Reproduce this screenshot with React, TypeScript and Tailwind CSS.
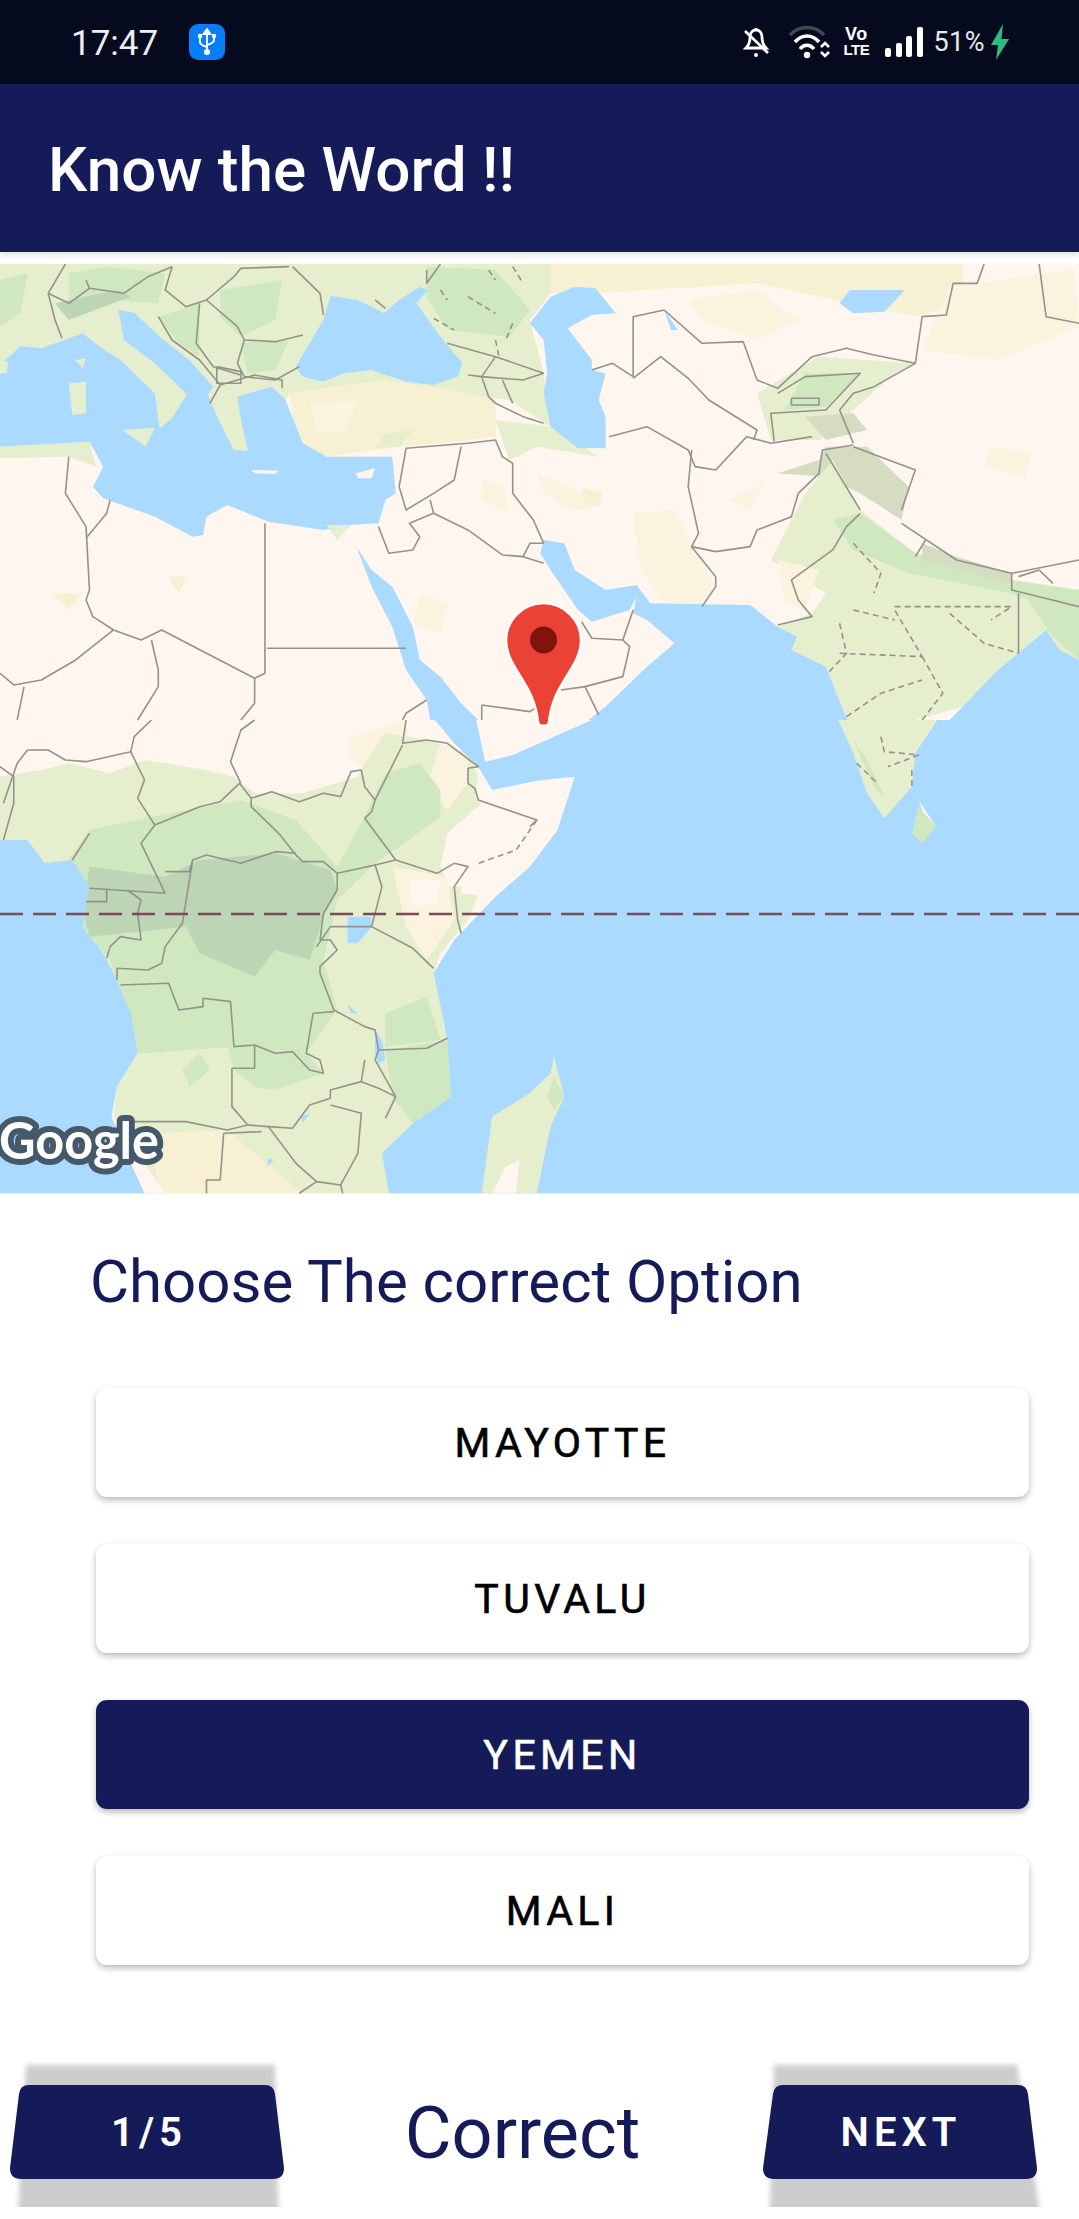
import React from "react";

const WATER = "#aadaff";
const CREAM = "#fff6ef";
const SAND = "#f8f0d2";
const PALE = "#fbf3de";
const LIGHT = "#e6efcd";
const GREEN = "#d0e8bf";
const DARK = "#bcd5b5";
const ROCK = "#d5dcc2";
const LINE = "#93938b";

type P = number[];
const pts = (a: P) => {
  let s = "";
  for (let i = 0; i < a.length; i += 2) s += a[i] + "," + a[i + 1] + " ";
  return s;
};

// Upper map: coordinates read from the upper half of the reference.
const upperFills: [string, P][] = [
  [SAND, [780,12,1400,12,1400,130,1330,170,1100,70,860,100,800,100]],
  [LIGHT, [0,12,800,12,800,100,770,180,790,340,800,500,740,420,660,400,560,360,420,400,380,580,210,570,0,320]],
  [GREEN, [0,60,40,40,30,160,0,200]],
  [GREEN, [100,40,160,20,240,40,230,130,160,120,100,120]],
  [GREEN, [320,90,410,60,400,180,350,230,320,170]],
  [GREEN, [620,20,720,30,770,150,740,230,650,210,620,110]],
  [GREEN, [350,250,420,240,400,330,360,340]],
  [GREEN, [230,170,290,130,290,290,260,250]],
  [DARK, [80,130,170,90,190,110,100,180]],
  [SAND, [420,400,560,360,660,390,720,420,720,530,640,550,580,560,470,590,430,550]],
  [PALE, [450,430,520,420,500,520,460,520]],
  [LIGHT, [560,520,600,510,580,560,545,565]],
  [LIGHT, [720,480,800,500,870,590,780,560,740,600]],
  [LIGHT, [0,560,130,545,140,620,100,590,0,595]],
  [PALE, [780,640,840,690,870,740,830,750,790,700]],
  [PALE, [920,760,980,750,1040,980,1020,1040,960,1020,930,920]],
  [PALE, [700,660,730,680,740,760,700,720]],
  [SAND, [845,680,875,700,870,740,850,730]],
  [PALE, [610,1000,650,1030,640,1120,600,1090]],
  [SAND, [245,950,270,950,260,1000]],
  [SAND, [75,1000,120,1000,100,1050]],
  [PALE, [1000,120,1100,90,1160,180,1100,240,1020,180]],
  [PALE, [1380,80,1560,30,1568,200,1450,300,1340,270]],
  [PALE, [1440,560,1500,580,1490,650,1430,620]],
  [PALE, [1060,720,1110,670,1090,750]],
  [LIGHT, [1100,400,1190,290,1330,310,1300,340,1240,450,1190,540,1120,540]],
  [GREEN, [1170,340,1250,340,1200,440,1140,450]],
  [ROCK, [1130,640,1190,600,1200,560,1260,560,1320,680,1310,780,1250,700,1200,650]],
  [ROCK, [1170,470,1240,460,1260,510,1200,540]],
  [LIGHT, [1130,1100,1180,1060,1200,1000,1120,900,1170,700,1210,600,1250,750,1330,880,1470,970,1568,1000,1568,1210,1480,1180,1400,1340,1330,1380,1230,1380,1200,1220,1150,1170]],
  [GREEN, [1210,780,1250,760,1330,880,1470,960,1568,990,1568,1080,1470,1000,1320,940,1240,870]],
  [GREEN, [1490,1010,1568,1040,1568,1200,1530,1130]],
  [ROCK, [1340,850,1390,890,1470,940,1470,970,1340,900]],
  [PALE, [1130,900,1190,930,1170,1050,1140,1020]],
];

const upperWater: P[] = [
  [0,315,30,258,60,265,120,220,145,260,175,300,225,400,232,505,250,475,272,400,300,395,320,490,340,570,360,572,350,480,345,410,395,380,415,420,440,550,475,590,570,590,575,700,560,720,550,790,510,795,470,810,390,785,330,735,300,770,295,825,280,830,225,770,150,715,135,680,150,620,130,545,0,560],
  [172,150,195,158,235,235,275,300,310,380,300,410,270,400,225,310,180,240],
  [480,108,520,120,558,160,580,120,610,80,622,90,605,130,640,230,672,310,665,350,630,375,590,365,540,330,500,340,470,365,440,350,430,320,450,250,470,180],
  [835,80,865,85,895,160,860,165,825,205,860,300,860,330,880,340,870,420,880,470,880,565,840,565,800,500,790,400,795,340,790,240,770,190,800,110],
  [518,860,540,930,570,980,600,1100,610,1200,640,1250,670,1330,695,1380,625,1380,620,1320,590,1230,570,1100,540,980],
  [790,840,820,850,835,930,880,990,925,975,945,1030,925,1010,915,1050,860,1085,840,1050,830,1020,800,930,785,880],
  [925,1010,945,1030,1090,1035,1130,1100,1158,1130,1150,1170,1200,1220,1225,1350,1232,1380,1380,1380,1450,1230,1480,1180,1520,1110,1540,1170,1568,1200,1568,1380,855,1380,880,1340,940,1220,980,1150,940,1080,920,1060],
  [1235,90,1315,90,1285,155,1240,160,1220,130],
  [965,150,985,210,975,210],
];

const upperLand: [string, P][] = [
  [LIGHT, [100,370,125,365,125,460,105,465]],
  [LIGHT, [178,510,225,503,212,560]],
  [CREAM, [365,630,405,632,400,642,370,640]],
  [CREAM, [517,640,545,625,540,655,520,655]],
  [LIGHT, [110,300,125,295,120,325]],
  [LIGHT, [0,305,12,305,10,340,0,340]],
  [LIGHT, [475,795,510,795,490,840]],
];

const upperBorders: P[] = [
  [95,12,70,100,80,180,90,235],[125,60,130,85,180,100,215,50,250,20],[70,100,100,130,130,85],
  [250,20,240,90,270,140,300,120,340,50,350,25,420,20],[425,20,465,100,470,165],
  [300,120,345,200,355,240,400,245,440,225],[290,130,285,250,310,320,350,345],
  [230,170,250,240,290,300,320,375,305,430],[355,240,345,310,355,350,400,360,435,320],
  [320,375,370,345,410,360,410,385],[315,320,350,335,350,370,315,370,315,320],
  [620,30,620,70,640,12],[650,250,720,290,790,340,760,360,700,350,680,345],
  [720,290,700,350,710,410,720,430,760,470,790,490],[730,360,745,430],[545,120,560,145],
  [590,565,680,550,720,540,730,590,745,610,745,700,775,780,790,850],
  [590,565,580,680,590,750,630,700,660,660,670,560],
  [625,720,630,760,595,790,610,830,600,870,565,880,550,800],
  [630,760,680,810,730,885,760,890,770,850,790,850],[760,890,790,910],
  [885,530,940,500,1000,570,1010,620,1040,630,1085,530,1120,550,1180,530],
  [1005,570,1000,680,1015,820,1005,860,1040,950,1040,980,1020,1040],
  [1005,860,1040,875,1090,860,1100,810,1150,770,1160,700,1190,640,1195,570,1240,555],
  [1250,760,1230,800,1210,870,1150,960,1160,1020,1180,1070,1130,1095],
  [860,330,890,310,920,350,920,170,965,150,1020,250,1080,245,1100,360,1130,385,1180,290,1230,265,1270,285,1330,310,1340,170,1375,165,1385,70,1420,70,1430,12],
  [920,355,960,290,1000,355,1030,420,1100,510,1095,540],
  [1130,400,1170,350,1250,340,1200,450,1120,460,1125,545],[1150,415,1190,415,1190,435,1150,435,1150,415],
  [1330,310,1270,380,1240,400,1220,450,1240,550],[1240,560,1330,630,1310,750],[1200,580,1250,750],
  [1310,790,1390,900,1470,940,1568,900],[1330,890,1345,840],[1510,12,1520,170,1568,190],
  [1470,940,1470,990,1568,1040],[1480,1000,1480,1180],[1480,950,1510,930,1530,970],
  [700,1335,770,1355,790,1330],[815,1290,850,1280,905,1250,915,1160,905,1140,860,1135,845,1085],
  [850,1280,870,1365],[905,1140,920,1050],
  [100,590,95,700,125,800,130,990,125,1020,135,1070,165,1110,205,1140,235,1110,370,1255,385,1240,385,790],
  [125,835,155,760,160,720],[165,1110,110,1200,60,1260,20,1275,0,1240],[35,1280,25,1380],
  [220,1140,230,1230,230,1280,200,1380],[370,1255,370,1330,350,1380],[388,1165,590,1165],
  [620,1320,590,1360,585,1380],[700,1335,700,1380],
];

const upperDashes: P[] = [
  [640,90,650,120],[680,110,720,160],[710,30,720,60],[745,20,760,70],[630,175,660,210],[745,190,735,240],[720,240,725,290],
  [1240,1050,1260,1060,1300,1080],[1220,1090,1230,1180,1205,1235],[1220,1180,1340,1190,1300,1050],[1300,1040,1380,1040,1470,1040,1440,1080],
  [1380,1060,1430,1150,1480,1180],[1240,850,1280,940,1270,1000],[1340,1190,1370,1300,1340,1380],[1230,1370,1280,1300,1340,1260],
];

// Lower map: coordinates read from the lower half of the reference.
const lowerFills: [string, P][] = [
  [PALE, [510,50,590,0,600,130,550,170,510,120]],
  [LIGHT, [0,170,60,150,100,130,160,160,210,120,300,150,340,170,370,220,440,220,520,170,530,130,560,40,620,60,680,100,695,170,690,230,700,250,680,350,640,430,650,500,700,500,680,600,640,700,630,760,650,960,655,1130,600,1210,555,1300,565,1420,210,1420,165,1190,170,1100,200,1000,100,600,0,360]],
  [PALE, [640,70,680,110,680,190,650,270,620,200]],
  [CREAM, [700,250,780,300,810,330,770,440,720,530,670,520,670,430,640,440,650,340]],
  [PALE, [570,440,650,470,660,600,620,720,590,620]],
  [CREAM, [595,480,640,480,635,550,600,560]],
  [GREEN, [100,420,130,330,220,290,350,240,430,300,490,440,530,290,560,160,610,130,640,210,640,290,580,380,545,430,490,540,470,720,490,870,445,1000,470,1060,400,1110,370,1100,340,1050,330,970,200,1000,160,720,120,620]],
  [GREEN, [190,880,340,900,340,980,210,1000]],
  [GREEN, [560,990,650,960,655,1130,600,1210,570,1130]],
  [GREEN, [560,880,620,830,640,960,560,980]],
  [GREEN, [265,1050,290,1000,305,1050,275,1100]],
  [GREEN, [340,1050,400,1010,460,1060,370,1100]],
  [DARK, [130,440,240,470,290,420,400,400,480,450,490,510,470,590,450,720,400,690,370,770,290,700,270,620,130,650,120,570]],
  [SAND, [220,1240,330,1230,440,1420,230,1420]],
  [CREAM, [165,1190,200,1300,240,1420,210,1420,170,1300]],
];

const lowerWater: P[] = [
  [632,0,692,0,705,125,745,105,860,0,1568,0,1568,1420,565,1420,555,1300,600,1210,655,1130,650,960,630,760,660,660,720,530,770,440,810,330,835,170,780,182,715,210,695,140,660,70],
  [0,360,40,360,65,430,105,420,130,500,120,620,150,700,165,760,190,880,200,1000,170,1100,162,1190,190,1330,210,1420,0,1420],
  [505,590,540,590,540,620,520,670,505,670],
  [545,930,555,960,560,1020,550,1030,545,1000],
  [505,855,520,880,510,880],
  [438,1190,450,1180,440,1210],
  [390,1315,398,1320,388,1340],
];

const lowerLand: [string, P][] = [
  [LIGHT, [805,1010,820,1130,800,1220,780,1420,700,1420,715,1190,770,1120,800,1060]],
  [GREEN, [805,1070,820,1130,805,1170,795,1130]],
  [CREAM, [735,1340,755,1320,750,1420,715,1420]],
  [LIGHT, [1218,0,1362,0,1330,100,1325,200,1285,295,1260,220,1240,100]],
  [GREEN, [1240,60,1260,120,1285,230,1270,200]],
  [CREAM, [1335,240,1360,320,1345,300]],
  [GREEN, [1335,260,1360,320,1340,370,1325,340]],
];

const lowerBorders: P[] = [
  [0,140,20,170,20,250,5,360],[40,90,70,90,95,120,125,125,190,95,210,180,200,235,225,315,290,260,320,245,348,190,365,235,395,215,435,245,470,220,495,230,510,155,525,150,530,200,545,240,540,275,530,295,575,420],
  [40,90,25,130,5,250],[190,95,195,50,220,0],[370,0,350,30,335,125,350,190],
  [590,0,585,70,620,60,650,70,695,140,680,145,680,190,690,205,695,240,780,300,770,320],[585,75,545,240],
  [225,315,205,370,240,520],[130,340,105,420],[575,420,635,460,660,430,680,440,660,500,665,600,670,640],
  [490,460,545,435,575,420],[545,435,555,500,540,620],[430,405,440,425,470,425,490,460,490,510,470,580,465,660],
  [430,400,400,395,350,430,300,405,280,420,265,610,240,680,235,730,215,750,170,745,170,780],
  [240,455,275,455,280,420],[430,405,405,340,365,260,365,235],[130,505,240,520],[155,510,155,545,125,545],
  [185,510,205,540,200,580,205,660,175,650,160,680,155,715],[480,620,540,620,600,685,630,745],[480,620,460,680],
  [465,660,480,660,490,690,465,740,465,760,485,870,530,920,545,930,550,990,545,1020,575,1130,560,1195],
  [175,795,245,790,260,870,295,860,295,835,335,845,340,980,370,975,400,1000,425,995,450,1050,470,1060,465,1020,445,1000,455,880,485,875],
  [370,975,370,1045,337,1045,337,1160,360,1215,330,1230,270,1205,195,1205],
  [360,1215,390,1220,425,1225,450,1155,480,1135,480,1110,525,1085,530,1020],
  [480,1155,525,1180,520,1300,495,1395,460,1385,435,1420],[525,1085,550,1105,575,1130],[550,990,620,985,650,955],
  [390,1220,430,1330,460,1385],[325,1240,320,1380,300,1380,300,1420],[325,1240,380,1235],[495,1395,498,1420],
];
const lowerDashes: P[] = [[780,300,750,390,695,430],[1280,50,1285,95,1335,105],[1335,105,1290,140],[1245,130,1275,190],[1325,150,1325,200]];

function Poly({ a, fill }: { a: P; fill: string }) {
  return <polygon points={pts(a)} fill={fill} />;
}
function Line({ a, dash }: { a: P; dash?: boolean }) {
  return (
    <polyline
      points={pts(a)}
      fill="none"
      stroke={LINE}
      strokeWidth={1.6}
      strokeDasharray={dash ? "6 4" : undefined}
      strokeLinejoin="round"
      vectorEffect="non-scaling-stroke"
    />
  );
}

function MapDrawing() {
  return (
    <svg viewBox="0 0 1079 930" width="1079" height="930" className="block">
      <rect width="1079" height="930" fill={CREAM} />
      <g transform="translate(0,-4) scale(0.6882,0.3333)">
        {upperFills.map(([c, a], i) => <Poly key={i} a={a} fill={c} />)}
        {upperWater.map((a, i) => <Poly key={i} a={a} fill={WATER} />)}
        {upperLand.map(([c, a], i) => <Poly key={i} a={a} fill={c} />)}
      </g>
      <g transform="translate(0,456) scale(0.6882,0.3333)">
        {lowerFills.map(([c, a], i) => <Poly key={i} a={a} fill={c} />)}
        {lowerWater.map((a, i) => <Poly key={i} a={a} fill={WATER} />)}
        {lowerLand.map(([c, a], i) => <Poly key={i} a={a} fill={c} />)}
        {lowerBorders.map((a, i) => <Line key={i} a={a} />)}
        {lowerDashes.map((a, i) => <Line key={i} a={a} dash />)}
      </g>
      <g transform="translate(0,-4) scale(0.6882,0.3333)">
        {upperBorders.map((a, i) => <Line key={i} a={a} />)}
        {upperDashes.map((a, i) => <Line key={i} a={a} dash />)}
      </g>
      <line x1="0" y1="650" x2="1079" y2="650" stroke="#7d4a5c" strokeWidth="2.6" strokeDasharray="23 10" />
      <text
        x="-1"
        y="895"
        fontFamily="Lato, 'Open Sans', sans-serif"
        fontWeight="700"
        fontSize="51"
        fill="#ffffff"
        stroke="#46596b"
        strokeWidth="12"
        strokeLinejoin="round"
        paintOrder="stroke"
        textLength="160"
        lengthAdjust="spacingAndGlyphs"
      >
        Google
      </text>
      <g transform="translate(0,-264)">
        <path
          d="M543.5 603 C564 603 581 620 581 640 C581 668 553 682 549 722 C548.5 727 538.5 727 538 722 C534 682 506 668 506 640 C506 620 523 603 543.5 603 Z"
          fill="#ea4335"
          stroke="#ffffff"
          strokeWidth="2.5"
        />
        <circle cx="543.5" cy="640" r="13.5" fill="#7f130e" />
      </g>
    </svg>
  );
}

function StatusIcons() {
  return (
    <div className="flex items-center h-full">
      <svg width="30" height="34" viewBox="0 0 30 34">
        <path d="M14 3v3M8 12c0-5 3-7 6-7s6 2 6 7c0 5 1 8 4 11H4c3-3 4-6 4-11z" fill="none" stroke="#fff" strokeWidth="2.8" />
        <path d="M3 6l23 22" stroke="#fff" strokeWidth="2.8" />
        <circle cx="14" cy="30" r="2" fill="#fff" />
      </svg>
      <svg width="44" height="34" viewBox="0 0 44 34" className="ml-[16px]">
        <path d="M2 10C11 0 27 0 36 10" fill="none" stroke="#45474f" strokeWidth="3.600" />
        <path d="M7 17C14 9 24 9 31 17" fill="none" stroke="#fff" strokeWidth="3.600" />
        <path d="M12 24C16 19 22 19 26 24" fill="none" stroke="#fff" strokeWidth="3.600" />
        <circle cx="19" cy="30" r="3.200" fill="#fff" />
        <path d="M33 22l4-4 4 4M33 27l4 4 4-4" fill="none" stroke="#fff" strokeWidth="2.600" />
      </svg>
      <div className="ml-[12px] flex flex-col items-center text-white font-bold text-[15px] leading-[16px] w-[24px] [font-family:'Liberation_Sans',sans-serif]">
        <span className="text-[18px] leading-[16px] tracking-[0.5px]">Vo</span>
        <span className="tracking-[-0.5px]">LTE</span>
      </div>
      <svg width="40" height="32" viewBox="0 0 40 32" className="ml-[16px]">
        <rect x="1" y="22" width="6" height="9" rx="2" fill="#fff" />
        <rect x="12" y="17" width="6" height="14" rx="2" fill="#fff" />
        <rect x="22" y="10" width="6" height="21" rx="2" fill="#fff" />
        <rect x="33" y="1" width="6" height="30" rx="2" fill="#fff" />
      </svg>
      <span className="ml-[9px] text-[27px] leading-none text-[#e8e8ea] tracking-[0.5px]">51%</span>
      <svg width="20" height="36" viewBox="0 0 20 36" className="ml-[5px]">
        <path d="M13 0L1 21h7L6 36l13-21h-7.500z" fill="#2bbd7e" />
      </svg>
    </div>
  );
}

function Option({ label, selected }: { label: string; selected?: boolean }) {
  return (
    <div
      className={
        "h-[109px] rounded-[11px] flex items-center justify-center text-[41px] pt-[2px] tracking-[4.4px] [-webkit-text-stroke:0.6px_currentColor] shadow-[0_3px_6px_rgba(0,0,0,0.28)] " +
        (selected ? "bg-[#151b59] text-white" : "bg-white text-black")
      }
    >
      {label}
    </div>
  );
}

function TrapButton({
  label,
  top,
  bottom,
  shadowTop,
  shadowBottom,
  id,
  center,
}: {
  label: string;
  top: [number, number];
  bottom: [number, number];
  shadowTop: [number, number];
  shadowBottom: [number, number];
  id: string;
  center: number;
}) {
  const d = `M${top[0] + 9} 24 L${top[1] - 9} 24 Q${top[1]} 24 ${top[1] + 1} 33 L${bottom[1]} 107 Q${bottom[1]} 118 ${bottom[1] - 11} 118 L${bottom[0] + 11} 118 Q${bottom[0]} 118 ${bottom[0]} 107 L${top[0] - 1} 33 Q${top[0]} 24 ${top[0] + 9} 24 Z`;
  return (
    <div className="relative w-[300px] h-[146px] shrink-0 overflow-hidden">
      <svg width="300" height="146" viewBox="0 0 300 146" className="absolute inset-0">
        <defs>
          <filter id={id} x="-10%" y="-10%" width="120%" height="130%">
            <feGaussianBlur stdDeviation="2.500" />
          </filter>
        </defs>
        <polygon
          points={`${shadowTop[0]},4 ${shadowTop[1]},4 ${shadowBottom[1]},170 ${shadowBottom[0]},170`}
          fill="#cdcdcd"
          filter={`url(#${id})`}
        />
        <path d={d} fill="#151b59" />
      </svg>
      <span
        className="absolute top-[72px] -translate-x-1/2 -translate-y-1/2 text-[40px] leading-none font-semibold text-white tracking-[5px]"
        style={{ left: center }}
      >
        {label}
      </span>
    </div>
  );
}

export default function App() {
  return (
    <div className="w-[1079px] h-[2219px] overflow-hidden bg-white [font-family:Roboto,sans-serif]">
      <div className="h-[84px] bg-[#060a1f] flex items-center justify-between pl-[71px] pr-[69px]">
        <div className="flex items-center">
          <span className="text-[35px] leading-none text-[#eeeeef] mt-[2px]">17:47</span>
          <div className="ml-[31px] w-[36px] h-[36px] rounded-[9px] bg-[#0a7dfb] flex items-center justify-center">
            <svg width="20" height="28" viewBox="0 0 20 28">
              <path d="M10 1l3.500 5h-7zM10 6v18" fill="#fff" stroke="#fff" strokeWidth="1.800" />
              <path d="M3 9v5q0 3 7 5M17 9v3q0 3-7 5" fill="none" stroke="#fff" strokeWidth="2" />
              <circle cx="10" cy="24" r="3" fill="#fff" />
              <rect x="1" y="6" width="4" height="4" fill="#fff" />
              <circle cx="17" cy="8" r="2.200" fill="#fff" />
            </svg>
          </div>
        </div>
        <StatusIcons />
      </div>
      <div className="h-[168px] bg-[#151b59] flex items-center pl-[48px] pt-[3px] shadow-[0_3px_6px_rgba(0,0,0,0.12)] relative">
        <h1 className="text-[62px] leading-none font-medium text-white">Know the Word !!</h1>
      </div>
      <div className="h-[12px] bg-white" />
      <div className="h-[930px] overflow-hidden">
        <MapDrawing />
      </div>
      <div className="h-[176px] mb-[18px] flex items-center pl-[90px] text-[60px] leading-none text-[#151b59]">
        Choose The correct Option
      </div>
      <div className="ml-[96px] w-[933px] flex flex-col gap-[47px]">
        <Option label="MAYOTTE" />
        <Option label="TUVALU" />
        <Option label="YEMEN" selected />
        <Option label="MALI" />
      </div>
      <div className="mt-[96px] flex items-center pr-[25px]">
        <TrapButton id="shadowLeft" label="1/5" top={[20, 274]} bottom={[10, 284]} shadowTop={[26, 275]} shadowBottom={[17, 279]} center={149} />
        <div className="flex-1 text-center text-[72px] leading-none text-[#151b59] -ml-[9px]">Correct</div>
        <TrapButton id="shadowRight" label="NEXT" top={[20, 273]} bottom={[9, 283]} shadowTop={[20, 263]} shadowBottom={[15, 289]} center={147} />
      </div>
    </div>
  );
}
